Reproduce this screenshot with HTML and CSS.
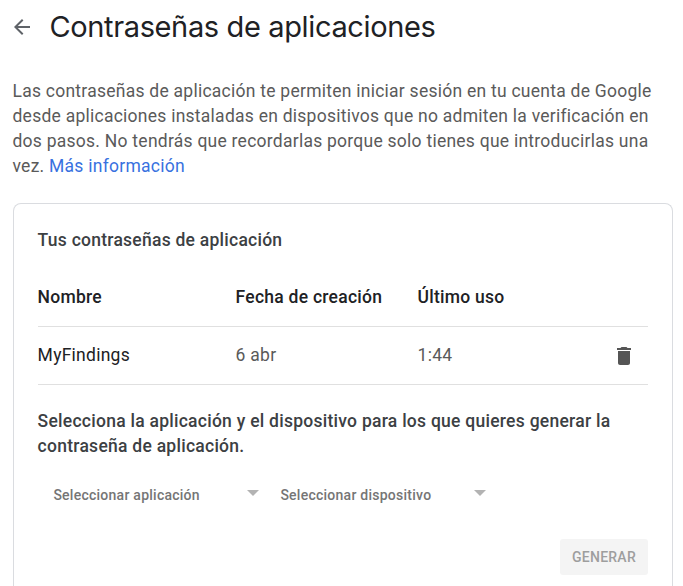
FILE: index.html
```html
<!DOCTYPE html>
<html lang="es">
<head>
<meta charset="utf-8">
<title>Contraseñas de aplicaciones</title>
<link rel="stylesheet" href="styles.css">
</head>
<body>
<header class="header">
  <svg class="back" viewBox="0 0 24 24"><path d="M20 11H7.83l5.59-5.59L12 4l-8 8 8 8 1.41-1.41L7.83 13H20v-2z"/></svg>
  <h1 class="title">Contraseñas de aplicaciones</h1>
</header>
<p class="intro">Las contraseñas de aplicación te permiten iniciar sesión en tu cuenta de Google<br>desde aplicaciones instaladas en dispositivos que no admiten la verificación en<br>dos pasos. No tendrás que recordarlas porque solo tienes que introducirlas una<br>vez. <a class="link">Más información</a></p>
<main class="card">
  <h2 class="subtitle">Tus contraseñas de aplicación</h2>
  <div class="row head"><span>Nombre</span><span>Fecha de creación</span><span>Último uso</span></div>
  <div class="row item"><span class="name">MyFindings</span><span>6 abr</span><span>1:44</span>
    <svg class="trash" viewBox="0 0 24 24"><path d="M6 19c0 1.1.9 2 2 2h8c1.1 0 2-.9 2-2V7H6v12zM19 4h-3.5l-1-1h-5l-1 1H5v2h14V4z"/></svg>
  </div>
  <p class="prompt">Selecciona la aplicación y el dispositivo para los que quieres generar la<br>contraseña de aplicación.</p>
  <div class="selects">
    <div class="select"><span>Seleccionar aplicación</span><i class="caret"></i></div>
    <div class="select"><span>Seleccionar dispositivo</span><i class="caret"></i></div>
  </div>
  <div class="actions"><button class="generate" disabled>GENERAR</button></div>
</main>
</body>
</html>
```
FILE: styles.css
```css
* { box-sizing: border-box; }
body { margin: 0; padding: 0 10px 0 13px; height: 586px; background: #fff; font-family: Roboto, sans-serif; letter-spacing: .25px; color: #5a5a5a; }
h1, h2, p { margin: 0; }
.header { display: flex; align-items: center; height: 54px; }
.back { width: 24px; height: 24px; margin: 0 15.7px 0 -3.3px; fill: #5f6368; }
.title { font: 400 29px/40px Inter, sans-serif; letter-spacing: -.36px; color: #202124; white-space: nowrap; }
.intro { margin-top: 25px; margin-left: -.5px; font-size: 17.5px; line-height: 25px; white-space: nowrap; }
.link { color: #3871e0; }
.card { height: 383px; margin: 24px 0 0; padding: 24px 24px 0; border: 1px solid #dadce0; border-bottom: 0; border-radius: 8px 8px 0 0; }
.subtitle { margin-left: -.4px; font-size: 17.5px; line-height: 25px; font-weight: 500; color: #3c4043; }
.row { display: grid; grid-template-columns: 198px 182px 1fr 24px; align-items: center; height: 58px; padding: 0 12.5px 0 0; border-bottom: 1px solid #e0e0e0; font-size: 17.5px; }
.row span { margin-left: -.4px; padding-bottom: 2px; }
.head { margin-top: 16px; font-weight: 500; color: #202124; }
.name { color: #202124; }
.trash { width: 24px; height: 24px; fill: #555; }
.prompt { margin: 24px 0 0 -.4px; font-size: 17.5px; line-height: 25px; font-weight: 500; color: #3c4043; letter-spacing: .26px; white-space: nowrap; }
.selects { display: flex; margin-top: 26px; padding-left: 15.4px; }
.select { display: flex; width: 227px; height: 20px; align-items: center; font-size: 14px; font-weight: 500; color: #757575; }
.select span { width: 194px; }
.caret { margin-bottom: 4px; border: 6px solid transparent; border-top-color: #b3b3b3; border-bottom: 0; }
.actions { display: flex; justify-content: flex-end; margin-top: 34px; }
.generate { width: 88px; height: 36px; padding: 0; border: 0; border-radius: 3px; background: #f4f4f4; color: #9e9e9e; font: 500 14px Roboto, sans-serif; letter-spacing: .25px; }
```
